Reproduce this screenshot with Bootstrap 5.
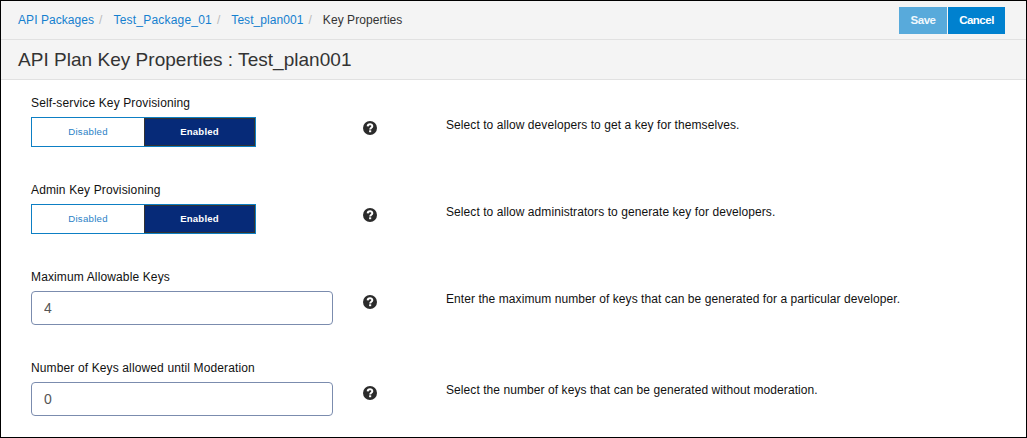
<!DOCTYPE html>
<html lang="en">
<head>
<meta charset="utf-8">
<meta name="viewport" content="width=device-width, initial-scale=1">
<title>API Plan Key Properties</title>
<link rel="stylesheet" href="https://cdn.jsdelivr.net/npm/bootstrap@5.3.0/dist/css/bootstrap.min.css">
<style>
body{font-family:"Liberation Sans",Arial,sans-serif;font-size:12px;line-height:18px;color:#111;background:#fff}
.page-frame{height:438px;border:1px solid #000}
.top-bar{height:39px;background:#f4f4f4;border-bottom:1px solid #e1e1e1;padding:0 21px 0 17px}
.title-bar{height:40px;background:#f4f4f4;border-bottom:1px solid #e1e1e1;padding:0 17px}
.title-bar h1{font-size:19px;line-height:24px;color:#333;font-weight:400;letter-spacing:.03px}
.breadcrumb{--bs-breadcrumb-divider-color:#bbb;font-size:12px;letter-spacing:.06px}
.breadcrumb-item:nth-child(2) a{letter-spacing:.2px}
.breadcrumb-item+.breadcrumb-item{padding-left:5px}
.breadcrumb-item+.breadcrumb-item::before{padding-right:11px}
.breadcrumb a{color:#1580cf}
.breadcrumb .active{color:#333}
.action-group{gap:1px}
.btn-act{--bs-btn-font-size:11.5px;--bs-btn-font-weight:700;--bs-btn-color:#fff;--bs-btn-bg:#0081cf;--bs-btn-border-width:0;--bs-btn-border-radius:0;--bs-btn-padding-x:0;--bs-btn-padding-y:0;--bs-btn-disabled-color:#f1f8fd;--bs-btn-disabled-bg:#58aadb;--bs-btn-disabled-opacity:1;height:27px;line-height:27px;letter-spacing:-.5px}
.save{width:48px}.cancel{width:57px}
.prop-list{padding:14px 30px 0}
.prop{height:87px}
.prop.tall{height:91px}
.field{width:302px}
.field .form-label{line-height:18px;margin-bottom:5px;letter-spacing:.13px}
.toggle{width:225px;height:30px;border:1px solid #0d7fc4}
.toggle .btn{--bs-btn-font-size:9.6px;--bs-btn-border-radius:0;--bs-btn-padding-x:0;--bs-btn-padding-y:0;--bs-btn-color:#2a7fc6;--bs-btn-border-width:0;line-height:28px;letter-spacing:.28px}
.toggle .btn.off{flex:0 0 112px}
.toggle .btn.on{--bs-btn-active-bg:#062a78;--bs-btn-active-color:#fff;box-shadow:inset 0 0 0 1px #333;font-weight:700;letter-spacing:.2px}
.field .form-control{height:34px;border:1px solid #7b8cae;border-radius:4px;font-size:14px;line-height:20px;padding:6px 12px;color:#555}
.help{width:14px;height:14px;margin:27px 0 0 30px}
.desc{margin:22px 0 0 69px;letter-spacing:.072px}
</style>
</head>
<body>
<div class="page-frame">
  <header class="top-bar d-flex align-items-center justify-content-between">
    <nav aria-label="breadcrumb">
      <ol class="breadcrumb mb-0">
        <li class="breadcrumb-item"><a class="text-decoration-none" href="#">API Packages</a></li>
        <li class="breadcrumb-item"><a class="text-decoration-none" href="#">Test_Package_01</a></li>
        <li class="breadcrumb-item"><a class="text-decoration-none" href="#">Test_plan001</a></li>
        <li class="breadcrumb-item active" aria-current="page">Key Properties</li>
      </ol>
    </nav>
    <div class="action-group d-flex">
      <button class="btn btn-act save" disabled>Save</button>
      <button class="btn btn-act cancel">Cancel</button>
    </div>
  </header>
  <div class="title-bar d-flex align-items-center"><h1 class="mb-0">API Plan Key Properties : Test_plan001</h1></div>
  <svg class="d-none"><symbol id="help" viewBox="0 0 14 14"><circle cx="7" cy="7" r="7" fill="#2b2b2b"/><path d="M4.7 5.4C4.8 2.5 9.4 2.6 9.3 5.2C9.3 6.7 7.2 6.7 7.2 8.4" fill="none" stroke="#fff" stroke-width="2"/><rect x="6.1" y="9.3" width="2.1" height="1.9" fill="#fff"/></symbol></svg>
  <main class="prop-list">
    <div class="prop d-flex align-items-start">
      <div class="field"><div class="form-label">Self-service Key Provisioning</div>
        <div class="toggle d-flex" role="group"><button class="btn off">Disabled</button><button class="btn on active flex-fill">Enabled</button></div></div>
      <svg class="help flex-shrink-0"><use href="#help"/></svg>
      <p class="desc">Select to allow developers to get a key for themselves.</p>
    </div>
    <div class="prop d-flex align-items-start">
      <div class="field"><div class="form-label">Admin Key Provisioning</div>
        <div class="toggle d-flex" role="group"><button class="btn off">Disabled</button><button class="btn on active flex-fill">Enabled</button></div></div>
      <svg class="help flex-shrink-0"><use href="#help"/></svg>
      <p class="desc">Select to allow administrators to generate key for developers.</p>
    </div>
    <div class="prop tall d-flex align-items-start">
      <div class="field"><label class="form-label d-block" for="max">Maximum Allowable Keys</label><input id="max" class="form-control" value="4"></div>
      <svg class="help flex-shrink-0"><use href="#help"/></svg>
      <p class="desc">Enter the maximum number of keys that can be generated for a particular developer.</p>
    </div>
    <div class="d-flex align-items-start">
      <div class="field"><label class="form-label d-block" for="mod">Number of Keys allowed until Moderation</label><input id="mod" class="form-control" value="0"></div>
      <svg class="help flex-shrink-0"><use href="#help"/></svg>
      <p class="desc mb-0">Select the number of keys that can be generated without moderation.</p>
    </div>
  </main>
</div>
<script src="https://cdn.jsdelivr.net/npm/bootstrap@5.3.0/dist/js/bootstrap.bundle.min.js"></script>
</body>
</html>
